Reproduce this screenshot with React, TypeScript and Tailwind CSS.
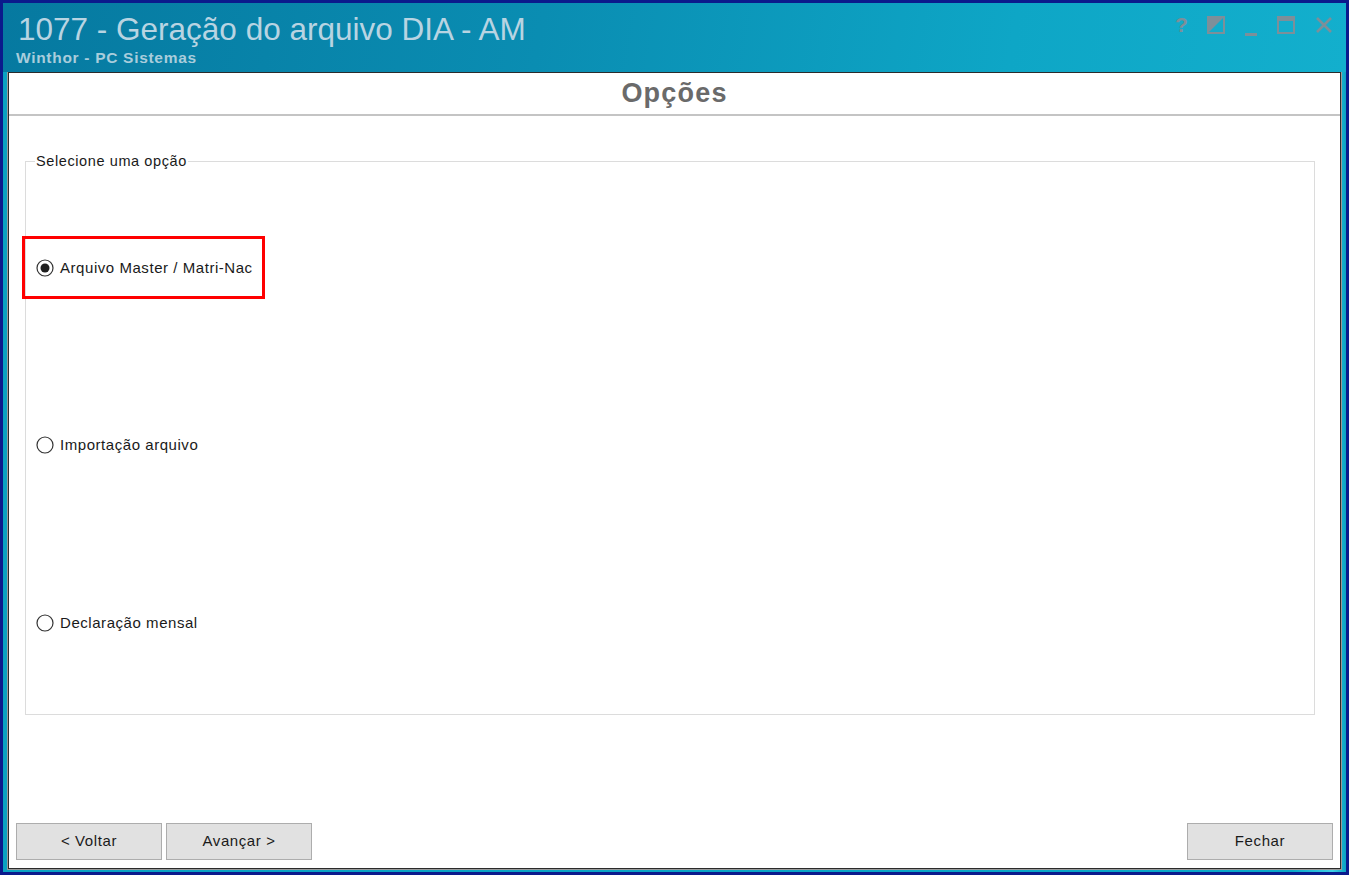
import React from "react";

function Radio({ checked }: { checked?: boolean }) {
  return (
    <svg width="18" height="18" viewBox="0 0 18 18" className="shrink-0">
      <circle cx="9" cy="9" r="8" fill="#ffffff" stroke="#333333" strokeWidth="1.2" />
      {checked && <circle cx="9" cy="9" r="4.5" fill="#1f1f1f" />}
    </svg>
  );
}

function Btn({ label }: { label: string }) {
  return (
    <div className="w-[146px] h-[37px] bg-[#e1e1e1] border border-[#adadad] flex items-center justify-center text-[15px] tracking-[0.6px] text-[#1a1a1a]">
      {label}
    </div>
  );
}

export default function App() {
  return (
    <div
      className="w-[1349px] h-[875px] overflow-hidden border-[3px] border-[#0b1a8c] bg-[#08a9c9] flex flex-col"
      style={{ fontFamily: '"Liberation Sans", Arial, sans-serif' }}
    >
      {/* Title bar */}
      <div className="relative h-[69px] shrink-0 bg-[linear-gradient(100deg,#0679a0_0%,#0a8db2_40%,#0ea6c6_75%,#13afcd_100%)] flex">
        <div className="pl-[15px] pt-[9px] flex flex-col">
          <div className="text-[31.5px] leading-[34px] text-[#b8d4e2]">1077 - Geração do arquivo DIA - AM</div>
          <div className="text-[15.5px] font-bold leading-[17px] mt-[3px] tracking-[0.7px] -ml-[2px] text-[#a9cddc]">Winthor - PC Sistemas</div>
        </div>
        <div className="ml-auto flex items-start gap-[20px] pr-[13px] pt-[10px] text-[#7d8f99]">
          <span className="text-[21px] font-bold leading-[24px] w-[12px] text-center">?</span>
          <svg width="18" height="18" viewBox="0 0 18 18" className="mt-[3px]">
            <rect x="1" y="1" width="16" height="16" fill="none" stroke="#7d8f99" strokeWidth="2" />
            <polygon points="1,1 17,1 1,17" fill="#7d8f99" />
          </svg>
          <svg width="12" height="18" viewBox="0 0 12 18" className="mt-[6px]">
            <rect x="0" y="14" width="12" height="3" fill="#7d8f99" />
          </svg>
          <svg width="18" height="18" viewBox="0 0 18 18" className="mt-[3px]">
            <rect x="1" y="1" width="16" height="16" fill="none" stroke="#7d8f99" strokeWidth="2" />
            <rect x="1" y="1" width="16" height="4" fill="#7d8f99" />
          </svg>
          <svg width="18" height="18" viewBox="0 0 18 18" className="mt-[3px]">
            <path d="M2 2 L16 16 M16 2 L2 16" stroke="#7d8f99" strokeWidth="2.6" />
          </svg>
        </div>
      </div>

      {/* Frame body */}
      <div className="flex-1 flex px-[5px] pb-[3px] bg-[linear-gradient(90deg,#0aa2c2_0%,#08a8c8_96%,#3fd0e6_99%,#0aa2c2_100%)]">
        <div className="flex-1 bg-white border border-[#2b2b2b] outline outline-1 outline-[#9a9a9a] flex flex-col">
          {/* header */}
          <div className="h-[43px] shrink-0 border-b-2 border-[#c4c4c4] flex items-center justify-center">
            <span className="text-[27px] font-bold text-[#6a6a6a] tracking-[1.2px]">Opções</span>
          </div>

          {/* group box */}
          <div className="pl-[16px] pr-[25px] pt-[45px]">
            <div className="relative h-[554px] border border-[#dcdcdc]">
              <span className="absolute left-[9px] top-[-9px] bg-white px-[1px] text-[14.5px] leading-[17px] tracking-[0.6px] text-[#1a1a1a]">
                Selecione uma opção
              </span>
              <div className="flex flex-col pl-[10px]">
                <div className="mt-[96px] flex items-center gap-[6px] text-[15px] tracking-[0.55px] text-[#1a1a1a] h-[20px]">
                  <Radio checked />
                  <span>Arquivo Master / Matri-Nac</span>
                </div>
                <div className="mt-[157px] flex items-center gap-[6px] text-[15px] tracking-[0.55px] text-[#1a1a1a] h-[20px]">
                  <Radio />
                  <span>Importação arquivo</span>
                </div>
                <div className="mt-[158px] flex items-center gap-[6px] text-[15px] tracking-[0.55px] text-[#1a1a1a] h-[20px]">
                  <Radio />
                  <span>Declaração mensal</span>
                </div>
              </div>
              {/* red highlight */}
              <div className="absolute left-[-4px] top-[74px] w-[243px] h-[63px] border-[3px] border-[#ff0000]" />
            </div>
          </div>

          {/* buttons */}
          <div className="mt-auto flex gap-[4px] px-[7px] pb-[8px]">
            <Btn label="< Voltar" />
            <Btn label="Avançar >" />
            <div className="ml-auto">
              <Btn label="Fechar" />
            </div>
          </div>
        </div>
      </div>
    </div>
  );
}
